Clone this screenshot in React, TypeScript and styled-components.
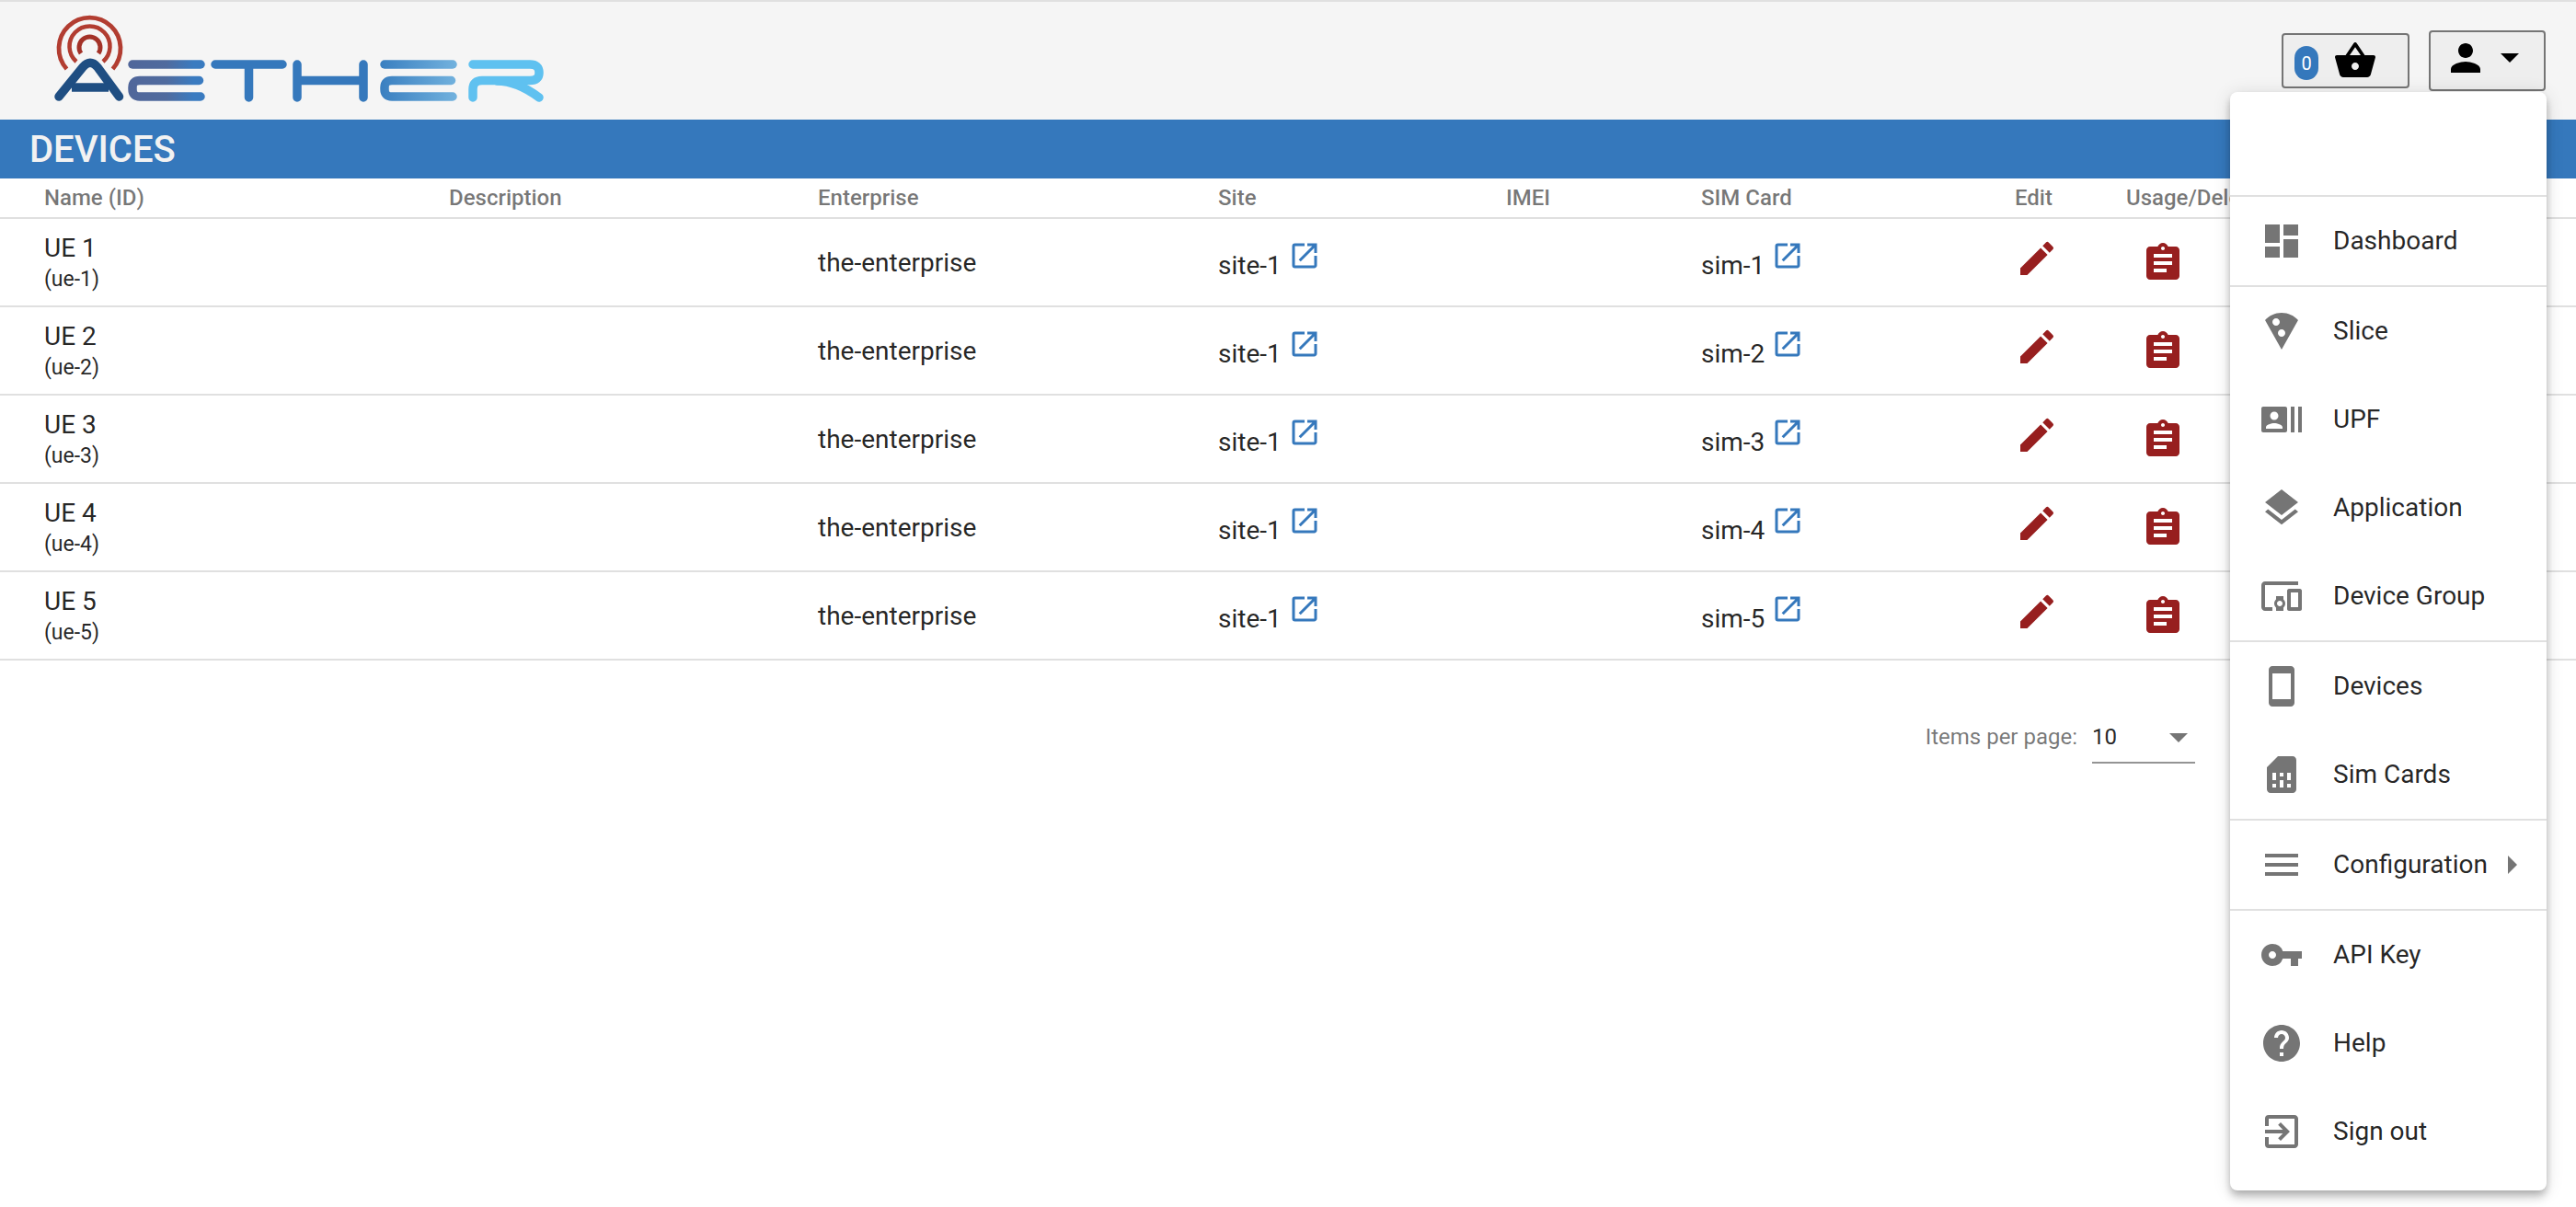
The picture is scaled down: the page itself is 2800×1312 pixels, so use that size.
import React from "react";
import styled, { createGlobalStyle } from "styled-components";
import {
  MdDashboard, MdLocalPizza, MdRecentActors, MdLayers, MdDevicesOther, MdStayCurrentPortrait,
  MdSimCard, MdMenu, MdVpnKey, MdHelp, MdExitToApp, MdPerson, MdShoppingBasket, MdEdit,
  MdAssignment, MdOpenInNew,
} from "react-icons/md";

const Global = createGlobalStyle`
  html, body { margin: 0; padding: 0; background: #fff; }
  body { font-family: Roboto, "Liberation Sans", sans-serif; color: rgba(0,0,0,.87); }
  * { box-sizing: border-box; }
`;

const Page = styled.div`
  position: relative;
  width: 2800px;
  height: 1312px;
  overflow: hidden;
  background: #fff;
`;

const Toolbar = styled.header`
  height: 130px;
  background: #f5f5f5;
  border-top: 2px solid #e0e0e0;
  display: flex;
  align-items: flex-start;
  justify-content: space-between;
  padding-right: 33px;
`;

const LogoSvg = styled.svg`
  display: block;
  width: 550px;
  height: 110px;
  margin: 8px 0 0 50px;
`;

const Actions = styled.div`
  display: flex;
  align-items: flex-start;
  gap: 21px;
  padding-top: 31px;
`;

const BasketButton = styled.div`
  width: 139px;
  height: 60px;
  margin-top: 3px;
  background: #eee;
  border: 2px solid #757575;
  border-radius: 4px;
  display: flex;
  align-items: center;
  padding-left: 12px;
  color: #000;
`;

const Badge = styled.span`
  width: 26px;
  height: 37px;
  margin-top: 5px;
  border-radius: 13px;
  background: #3578bc;
  color: #fff;
  font-size: 20px;
  display: flex;
  align-items: center;
  justify-content: center;
  margin-right: 16px;
`;

const UserButton = styled.div`
  width: 127px;
  height: 66px;
  background: #eee;
  border: 2px solid #757575;
  border-radius: 4px;
  display: flex;
  align-items: center;
  padding-left: 14px;
  color: #000;
`;

const PersonIcon = styled(MdPerson)`
  width: 48px;
  height: 48px;
  margin-bottom: 6px;
`;

const Caret = styled.span`
  width: 0;
  height: 0;
  margin: 0 0 6px 14px;
  border-left: 10px solid transparent;
  border-right: 10px solid transparent;
  border-top: 10px solid #000;
`;

const TitleBar = styled.div`
  height: 64px;
  background: #3578bc;
  color: #f2f2f2;
  font-size: 40px;
  font-weight: 500;
  display: flex;
  align-items: center;
  padding-left: 32px;
`;

const columns = "440px 401px 435px 313px 212px 341px 121px 1fr";

const HeaderRow = styled.div`
  display: grid;
  grid-template-columns: ${columns};
  height: 44px;
  align-items: center;
  padding-left: 48px;
  border-bottom: 2px solid #e0e0e0;
  font-size: 24px;
  font-weight: 500;
  color: rgba(0,0,0,.54);
`;

const Row = styled.div`
  display: grid;
  grid-template-columns: ${columns};
  height: 96px;
  align-items: center;
  padding: 2px 0 0 48px;
  border-bottom: 2px solid #e0e0e0;
  font-size: 28px;
`;

const NameCell = styled.div`
  display: flex;
  flex-direction: column;
  line-height: 34px;
  padding-top: 2px;
`;

const SubId = styled.span`
  font-size: 23px;
`;

const EnterpriseCell = styled.div`
  padding-bottom: 2px;
`;

const LinkCell = styled.div`
  display: flex;
  align-items: center;
  padding-top: 4px;
`;

const LinkIcon = styled(MdOpenInNew)`
  width: 36px;
  height: 36px;
  color: #3578bc;
  margin: 0 0 20px 7px;
`;

const EditIcon = styled(MdEdit)`
  display: block;
  width: 48px;
  height: 48px;
  color: #971f1f;
  margin-bottom: 10px;
`;

const UsageIcon = styled(MdAssignment)`
  display: block;
  width: 48px;
  height: 48px;
  color: #971f1f;
  margin-left: 16px;
`;

const Paginator = styled.div`
  display: flex;
  justify-content: flex-end;
  align-items: flex-start;
  padding: 56px 414px 0 0;
  font-size: 24px;
  color: rgba(0,0,0,.54);
`;

const PageLabel = styled.span`
  line-height: 54px;
  margin-right: 16px;
`;

const PageSelect = styled.div`
  position: relative;
  width: 112px;
  height: 56px;
  border-bottom: 2px solid rgba(0,0,0,.42);
  line-height: 54px;
  color: rgba(0,0,0,.87);
`;

const SelectArrow = styled.span`
  position: absolute;
  right: 8px;
  top: 23px;
  width: 0;
  height: 0;
  border-left: 10px solid transparent;
  border-right: 10px solid transparent;
  border-top: 10px solid rgba(0,0,0,.54);
`;

const Menu = styled.nav`
  position: absolute;
  left: 2424px;
  top: 100px;
  width: 344px;
  height: 1194px;
  padding: 16px 0;
  background: #fff;
  border-radius: 8px;
  box-shadow: 0 4px 8px -2px rgba(0,0,0,.2), 0 8px 10px 0 rgba(0,0,0,.14), 0 2px 20px 0 rgba(0,0,0,.12);
`;

const MenuBlank = styled.div`
  height: 96px;
`;

const Divider = styled.div`
  height: 2px;
  background: #e0e0e0;
`;

const MenuItem = styled.div`
  position: relative;
  height: 96px;
  display: flex;
  align-items: center;
  padding-left: 32px;
  font-size: 28px;
  color: rgba(0,0,0,.87);
  svg { width: 48px; height: 48px; margin-right: 32px; color: rgba(0,0,0,.54); flex: none; }
`;

const MenuLabel = styled.span`
  margin-bottom: 2px;
`;

const SubArrow = styled.span`
  position: absolute;
  right: 32px;
  top: 38px;
  width: 0;
  height: 0;
  border-top: 10px solid transparent;
  border-bottom: 10px solid transparent;
  border-left: 10px solid rgba(0,0,0,.54);
`;

const Logo = () => (
  <LogoSvg viewBox="50 10 550 110" fill="none" strokeLinecap="round" strokeLinejoin="round">
    <defs>
      <linearGradient id="e1" gradientUnits="userSpaceOnUse" x1="139" y1="0" x2="223" y2="0">
        <stop offset="0" stopColor="#50669a" />
        <stop offset="0.5" stopColor="#506b9e" />
        <stop offset="0.85" stopColor="#3a7bc0" />
      </linearGradient>
      <linearGradient id="e2" gradientUnits="userSpaceOnUse" x1="413" y1="0" x2="497" y2="0">
        <stop offset="0" stopColor="#3a7fc0" />
        <stop offset="1" stopColor="#72b2de" />
      </linearGradient>
    </defs>
    <g stroke="#b23d31" strokeLinecap="butt" fill="none">
      <path d="M72.500 75 A33.500 33.500 0 1 1 122.500 75" strokeWidth="4.800" />
      <path d="M83 67 A22 22 0 1 1 112 67" strokeWidth="4.500" />
      <path d="M88 58 A11.500 11.500 0 1 1 107 58" strokeWidth="5" stroke="#a33228" />
    </g>
    <g stroke="#1f4e82" strokeWidth="9.500">
      <path d="M64 105 L90 73 Q98 63.500 106 73 L129.500 105" />
      <path d="M78 95 H118" strokeLinecap="butt" />
    </g>
    <g stroke="url(#e1)" strokeWidth="9.500">
      <path d="M144 70 H218" />
      <path d="M216.500 87.500 H152 Q144 87.500 144 95 V97 Q144 105 152 105 H218" />
    </g>
    <g stroke="#3578bc" strokeWidth="9.500">
      <path d="M234 70 H307 M270.500 70 V106" />
      <path d="M323 70 V106 M395 70 V106 M323 87.500 H395" />
    </g>
    <g stroke="url(#e2)" strokeWidth="9.500">
      <path d="M418 70 H492" />
      <path d="M490.500 87.500 H426 Q418 87.500 418 95 V97 Q418 105 426 105 H492" />
    </g>
    <g stroke="#5fc1f0" strokeWidth="9.500">
      <path d="M514 70 H576 Q586 70 586 79 Q586 87.500 576 87.500 H524 Q514 87.500 514 97 V106" />
      <path d="M540 88 Q562 88 586 106" />
    </g>
  </LogoSvg>
);

const rows = [1, 2, 3, 4, 5];

type NavEntry = { label: string; icon: React.ReactNode; sub?: boolean } | "divider";

const nav: NavEntry[] = [
  "divider",
  { label: "Dashboard", icon: <MdDashboard /> },
  "divider",
  { label: "Slice", icon: <MdLocalPizza /> },
  { label: "UPF", icon: <MdRecentActors /> },
  { label: "Application", icon: <MdLayers /> },
  { label: "Device Group", icon: <MdDevicesOther /> },
  "divider",
  { label: "Devices", icon: <MdStayCurrentPortrait /> },
  { label: "Sim Cards", icon: <MdSimCard /> },
  "divider",
  { label: "Configuration", icon: <MdMenu />, sub: true },
  "divider",
  { label: "API Key", icon: <MdVpnKey /> },
  { label: "Help", icon: <MdHelp /> },
  { label: "Sign out", icon: <MdExitToApp /> },
];

export default function App() {
  return (
    <Page>
      <Global />
      <Toolbar>
        <Logo />
        <Actions>
          <BasketButton>
            <Badge>0</Badge>
            <MdShoppingBasket size={48} />
          </BasketButton>
          <UserButton>
            <PersonIcon />
            <Caret />
          </UserButton>
        </Actions>
      </Toolbar>
      <TitleBar>DEVICES</TitleBar>
      <HeaderRow>
        <div>Name (ID)</div>
        <div>Description</div>
        <div>Enterprise</div>
        <div>Site</div>
        <div>IMEI</div>
        <div>SIM Card</div>
        <div>Edit</div>
        <div>Usage/Delete</div>
      </HeaderRow>
      {rows.map((n) => (
        <Row key={n}>
          <NameCell>
            <span>UE {n}</span>
            <SubId>(ue-{n})</SubId>
          </NameCell>
          <div />
          <EnterpriseCell>the-enterprise</EnterpriseCell>
          <LinkCell>
            site-1
            <LinkIcon />
          </LinkCell>
          <div />
          <LinkCell>
            sim-{n}
            <LinkIcon />
          </LinkCell>
          <div>
            <EditIcon />
          </div>
          <div>
            <UsageIcon />
          </div>
        </Row>
      ))}
      <Paginator>
        <PageLabel>Items per page:</PageLabel>
        <PageSelect>
          10
          <SelectArrow />
        </PageSelect>
      </Paginator>
      <Menu>
        <MenuBlank />
        {nav.map((entry, i) =>
          entry === "divider" ? (
            <Divider key={i} />
          ) : (
            <MenuItem key={entry.label}>
              {entry.icon}
              <MenuLabel>{entry.label}</MenuLabel>
              {entry.sub && <SubArrow />}
            </MenuItem>
          )
        )}
      </Menu>
    </Page>
  );
}
